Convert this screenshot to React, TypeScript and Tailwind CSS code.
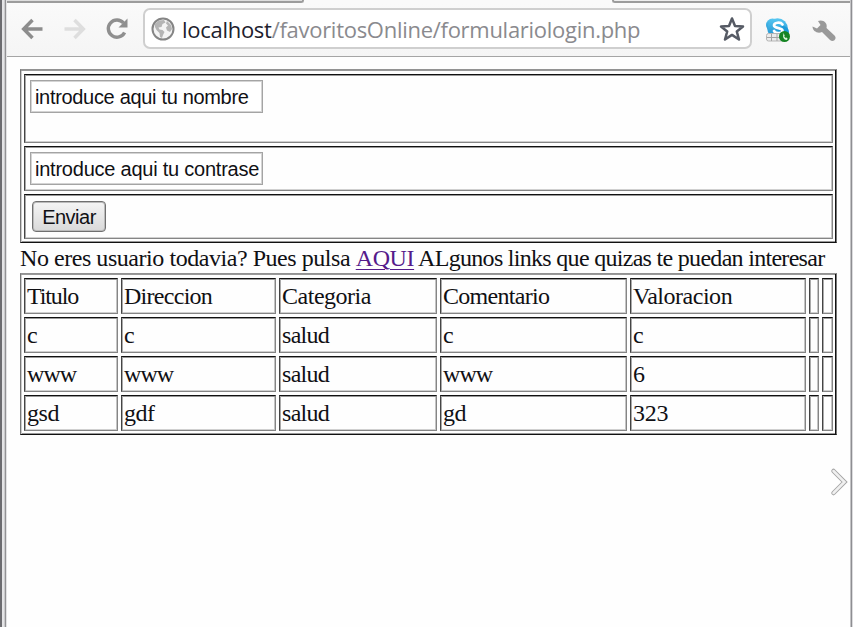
import React from "react";

const cell =
  "border border-t-[#111] border-l-[#444] border-b-[#858585] border-r-[#858585] shadow-[inset_1px_0_0_#aaa,inset_0_1px_0_#999,inset_-1px_0_0_#c4c4c4,inset_0_-1px_0_#d0d0d0]";
const frame =
  "border border-t-[#929292] border-l-[#777] border-b-[#111] border-r-[#777] shadow-[inset_-1px_0_0_#111,inset_0_1px_0_#999,inset_1px_0_0_#ccc,inset_0_-1px_0_#999]";
const field =
  "block h-[33px] w-[233px] border border-[#a4a4a4] bg-white pl-[4px] pt-[2px] text-[20px] text-[#101014] shadow-[inset_0_0_0_1px_#d4d4d4] outline-none";

const rows = [
  ["Titulo", "Direccion", "Categoria", "Comentario", "Valoracion", "", ""],
  ["c", "c", "salud", "c", "c", "", ""],
  ["www", "www", "salud", "www", "6", "", ""],
  ["gsd", "gdf", "salud", "gd", "323", "", ""],
];

const spacing: Record<string, string> = {
  Titulo: "tracking-[-1.1px]",
  Direccion: "tracking-[-0.72px]",
  Comentario: "tracking-[-0.7px]",
  salud: "tracking-[-0.7px]",
  www: "tracking-[-0.9px]",
  "323": "tracking-[-0.2px]",
};

function Toolbar() {
  return (
    <header className="flex h-[54px] items-start border-b border-[#a5a5a5] bg-gradient-to-b from-[#fafafa] to-[#f5f5f5] pl-[14px] pt-[6px]">
      <svg className="mt-[9px] shrink-0" width="22" height="22" viewBox="0 0 22 22" fill="none" stroke="#8d8d8d" strokeWidth="3.5">
        <path d="M11.5 2 2.7 11l8.8 9M3 11h18.5" />
      </svg>
      <svg className="ml-[21px] mt-[9px] shrink-0" width="22" height="22" viewBox="0 0 22 22" fill="none" stroke="#dedede" strokeWidth="3.5">
        <path d="M10.5 2 19.3 11l-8.8 9M19 11H.5" />
      </svg>
      <svg className="ml-[19px] mt-[8px] shrink-0" width="24" height="24" viewBox="0 0 24 24">
        <path d="M18.5 6A8.6 8.6 0 1 0 19.6 15.5" fill="none" stroke="#8f8f8f" strokeWidth="3.4" />
        <path d="M22.5 1.500v9h-9z" fill="#8f8f8f" />
      </svg>
      <div className="ml-[14px] mt-[3px] flex h-[41px] w-[609px] shrink-0 -translate-y-1 items-center rounded-[7px] border-2 border-[#cfcfcf] bg-white pl-[6px]">
        <svg className="shrink-0" width="24" height="24" viewBox="0 0 24 24">
          <circle cx="12" cy="12" r="10.500" fill="#f4f4f4" stroke="#858585" strokeWidth="2" />
          <path d="M4 6.500 8 3.500 13 3l1.500 2.500-3 1.500-1 3-3 .5 1 2 3 .5 2 2-1.500 3-1 3-2-1-.5-4-3-3-1.500-3zM16 4l4 4 1 4-2 3-3-1.500-1-3 2-2-2-2z" fill="#b5b5b5" />
        </svg>
        <span className="ml-[7px] w-[537px] whitespace-nowrap font-['Open_Sans','Noto_Sans',sans-serif] text-[22px] leading-[34px] tracking-[-0.28px] text-[#8a8a8e]">
          <span className="text-[#20202c]">localhost</span>/favoritosOnline/formulariologin.php
        </span>
        <svg className="shrink-0" width="26" height="26" viewBox="0 0 26 26">
          <path d="M13 2.500 16 10l8 .5-6.200 5 2.200 8-7-4.600-7 4.600 2.200-8L2 10.500 10 10z" fill="#fff" stroke="#555a64" strokeWidth="2.500" strokeLinejoin="round" />
        </svg>
      </div>
      <svg className="ml-[12px] mt-[8px] shrink-0" width="28" height="27" viewBox="0 0 28 27">
        <defs>
          <linearGradient id="sky" x2="0" y2="1">
            <stop stopColor="#58c8f2" />
            <stop offset="1" stopColor="#188bcc" />
          </linearGradient>
        </defs>
        <circle cx="8.500" cy="8" r="6.500" fill="url(#sky)" />
        <circle cx="13.500" cy="11.500" r="10.300" fill="url(#sky)" />
        <circle cx="19" cy="15" r="6" fill="#1c9bd9" />
        <path d="M18.500 7.500c-2-3-8.500-2-8.500.8 0 3.700 8.500 2 8.500 5.400 0 3-6.500 3.300-8.500.300" fill="none" stroke="#fff" strokeWidth="2.700" strokeLinecap="round" />
        <rect x="2.500" y="16.500" width="17" height="7.500" rx="2" fill="#ececec" stroke="#b5b5b5" />
        <path d="M3 20.500h15M7.500 17v7M13 17v7" stroke="#a5a5a5" />
        <circle cx="20.500" cy="19.500" r="5.500" fill="#158423" />
        <path d="m18.500 17 1.200-.5 1 2-.5 1 1.500 1.500 1-.4 1 1.500-1.200.9c-2.500 0-4.300-3.500-3-6z" fill="#d8f3d6" />
      </svg>
      <svg className="ml-[18px] mt-[10px] shrink-0" width="28" height="26" viewBox="0 0 28 26">
        <path d="M8 2C13 0 18 4 16.500 9l8 7.500c3 3-1 7.500-4.500 4.500l-8-8C7.500 15 2.500 12 2.500 7.500L7 9.500 10.500 6z" fill="#999" />
      </svg>
    </header>
  );
}

export default function App() {
  return (
    <div className="relative flex h-[627px] w-[853px] overflow-hidden bg-[#fefefe]">
      <div className="flex w-[7px] shrink-0">
        <div className="w-[2px] bg-[#6c6c70]" />
        <div className="w-[2px] bg-[#e4e4e6]" />
        <div className="w-px bg-[#c9c9cb]" />
        <div className="w-px bg-[#929294]" />
        <div className="w-px bg-[#e2e2e4]" />
      </div>
      <div className="flex w-[843px] shrink-0 flex-col">
        <div className="flex h-[3px] justify-between bg-[#f0f0f0]">
          <div className="h-[3px] w-[297px] rounded-br border-b-2 border-r-2 border-[#9c9c9c] bg-[#dedede]" />
          <div className="h-[3px] flex-1 bg-[#fafafa]" />
          <div className="h-[3px] w-[238px] rounded-bl border-b-2 border-l-2 border-[#9c9c9c] bg-[#eee]" />
        </div>
        <Toolbar />
        <main className="flex w-[830px] flex-col pl-[13px] pt-[12px] font-['Liberation_Serif','Times_New_Roman',serif] text-[24px] tracking-[-0.48px] text-[#101014]">
          <form className={`${frame} flex h-[174px] flex-col gap-[3px] px-[3px] pt-[4px] font-['Liberation_Sans',Arial,sans-serif]`} onSubmit={(e) => e.preventDefault()}>
            <div className={`${cell} h-[69px] pl-[5px] pt-[5px]`}>
              <input className={`${field} tracking-[-0.32px]`} defaultValue="introduce aqui tu nombre" />
            </div>
            <div className={`${cell} h-[45px] pl-[5px] pt-[5px]`}>
              <input className={`${field} tracking-[-0.23px]`} defaultValue="introduce aqui tu contrase" />
            </div>
            <div className={`${cell} h-[45px] pl-[7px] pt-[6px]`}>
              <button className="block h-[31px] w-[74px] rounded-[4px] border border-[#707070] bg-gradient-to-b from-[#f5f5f5] to-[#d9d9d9] text-[20px] leading-[28px] tracking-[-0.5px] shadow-[inset_0_0_0_1px_#bbb]">Enviar</button>
            </div>
          </form>
          <p className="h-[30px] whitespace-nowrap leading-[31px]">
            <span className="tracking-[-0.45px]">No eres usuario todavia? Pues pulsa </span>
            <a className="tracking-[-0.4px] text-[#551a8b] underline decoration-1 underline-offset-[3px]" href="#">AQUI</a>
            <span className="tracking-[-0.7px]"> ALgunos links que quizas te puedan interesar</span>
          </p>
          <div className={`${frame} grid h-[162px] auto-rows-[36px] grid-cols-[94px_155px_158px_187px_176px_10px_11px] content-start gap-[3px] pl-[3px] pt-[4px]`}>
            {rows.flatMap((row, r) =>
              row.map((text, c) => (
                <div key={`${r}-${c}`} className={`${cell} whitespace-nowrap pl-[2px] leading-[34px] ${spacing[text] ?? ""}`}>
                  {text}
                </div>
              )),
            )}
          </div>
        </main>
      </div>
      <div className="flex flex-1">
        <div className="w-px bg-[#c4c4c6]" />
        <div className="w-px bg-[#8e8e92]" />
        <div className="w-px bg-[#dcdcde]" />
      </div>
      <svg className="absolute left-[828px] top-[466px]" width="20" height="32" viewBox="0 0 20 32" fill="none">
        <path d="M5.500 5 16.500 16 5.500 27" stroke="#a5a5a5" strokeWidth="4.500" strokeLinecap="round" />
        <path d="M5.500 5 16.500 16 5.500 27" stroke="#f0f0f0" strokeWidth="2.500" strokeLinecap="round" />
      </svg>
    </div>
  );
}
